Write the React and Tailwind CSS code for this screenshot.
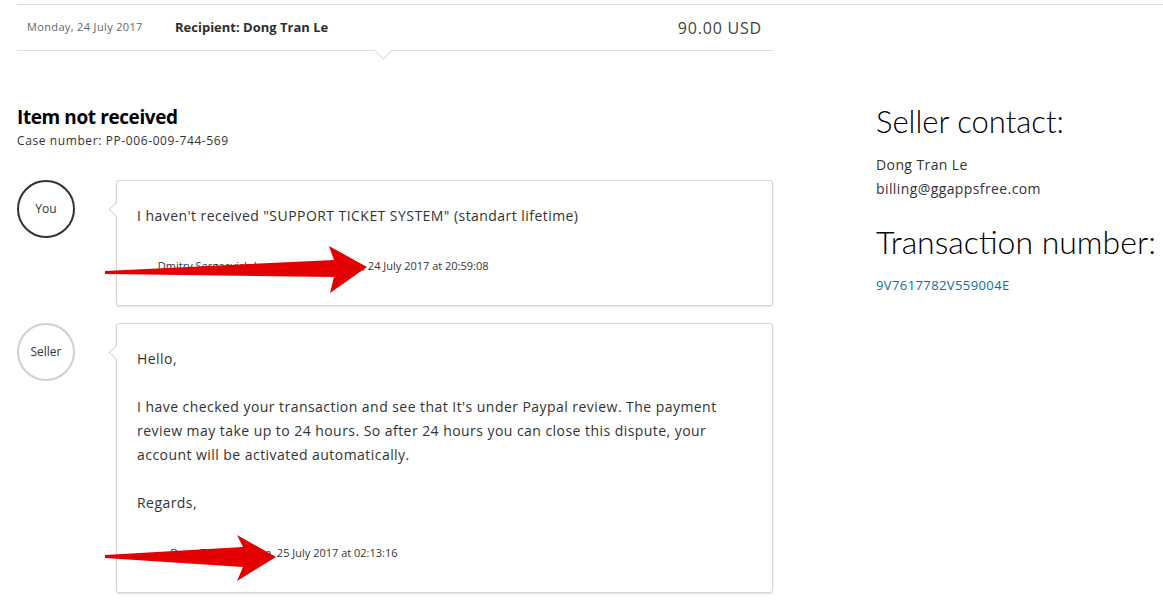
// Dispute case page: header row, conversation, seller contact column
export default function App() {
  const body = { fontFamily: '"Open Sans", "Liberation Sans", sans-serif' }
  const heading = { fontFamily: 'Lato, "Open Sans", sans-serif' }

  // Reusable message bubble with the little pointer on the left
  const Bubble = ({ children, author, date, authorWidth }) => (
    <div className="relative flex-1 bg-white border border-[#d4d4d4] rounded-[3px] shadow-[0_1px_2px_rgba(0,0,0,0.12)] pl-[20px] pr-[40px] pt-[23px] pb-[27px]">
      <div className="absolute left-[-6px] top-[23px] w-[11px] h-[11px] bg-white border-l border-b border-[#d4d4d4] rotate-45" />
      <div className="text-[14px] leading-[24px] tracking-[0.45px] text-[#333]">{children}</div>
      <p className="mt-[26px] pl-[8px] text-[11px] leading-[24px] text-[#333] whitespace-nowrap">
        <span className={`inline-block text-right align-bottom ${authorWidth}`}>{author}</span>
        {date}
      </p>
    </div>
  )

  return (
    <div className="relative min-h-screen bg-white text-[#2c2e2f]" style={body}>
      <div className="ml-[17px] mt-[4px] border-t border-[#dedede]" />

      <div className="flex pl-[17px]">
        {/* Left column */}
        <div className="w-[756px] shrink-0">
          {/* Transaction summary row */}
          <div className="relative flex items-center h-[46px] border-b border-[#dedede] pl-[10px] pr-[11px]">
            <span className="w-[148px] text-[11px] tracking-[0.35px] text-[#666]">Monday, 24 July 2017</span>
            <span className="text-[13px] font-bold text-[#2c2e2f]">Recipient: Dong Tran Le</span>
            <span className="ml-auto text-[16px] tracking-[0.8px] text-[#444]">90.00 USD</span>
            <div className="absolute left-[360px] bottom-[-7px] w-[13px] h-[13px] bg-white border-r border-b border-[#dedede] rotate-45" />
          </div>

          {/* Case title */}
          <div className="mt-[54px]">
            <h1 className="text-[19px] leading-[24px] font-bold text-black tracking-[-0.4px]">Item not received</h1>
            <p className="text-[12px] leading-[24px] tracking-[0.6px] text-[#333]">Case number: PP-006-009-744-569</p>
          </div>

          {/* Conversation */}
          <div className="mt-[27px] flex flex-col gap-[17px]">
            <div className="flex gap-[41px]">
              <div className="w-[58px] h-[58px] shrink-0 rounded-full border-2 border-[#333] flex items-center justify-center text-[12px] text-[#333]">
                You
              </div>
              <Bubble author="Dmitry Sergeevich Ivanov wrote on Mon," date=" 24 July 2017 at 20:59:08" authorWidth="w-[220px]">
                <p>I haven't received "SUPPORT TICKET SYSTEM" (standart lifetime)</p>
              </Bubble>
            </div>

            <div className="flex gap-[41px]">
              <div className="w-[58px] h-[58px] shrink-0 rounded-full border-2 border-[#d0d0d0] flex items-center justify-center text-[12px] text-[#333]">
                Seller
              </div>
              <Bubble author="Dong Tran Le wrote," date=" 25 July 2017 at 02:13:16" authorWidth="w-[129px]">
                <p>Hello,</p>
                <p className="mt-[24px]">
                  I have checked your transaction and see that It's under Paypal review. The payment review may take up to 24 hours. So after 24 hours you can close this dispute, your account will be activated automatically.
                </p>
                <p className="mt-[24px]">Regards,</p>
              </Bubble>
            </div>
          </div>
        </div>

        {/* Right column */}
        <div className="ml-[103px] pt-[98px] whitespace-nowrap">
          <h2 className="text-[31px] leading-[36px] font-light text-black" style={heading}>Seller contact:</h2>
          <p className="mt-[14px] text-[14px] leading-[24px] tracking-[0.4px] text-[#333]">Dong Tran Le</p>
          <p className="text-[14px] leading-[24px] tracking-[0.4px] text-[#333]">billing@ggappsfree.com</p>
          <h2 className="mt-[21px] text-[32px] leading-[40px] font-light text-black" style={heading}>Transaction number:</h2>
          <p className="mt-[11px] text-[13px] leading-[24px] tracking-[0.4px] text-[#0b6fa4]">9V7617782V559004E</p>
        </div>
      </div>

      {/* Red annotation arrows */}
      <svg className="absolute inset-0 w-full h-full pointer-events-none" width="1163" height="602">
        <polygon fill="#e30000" points="105,267 334,256 329,242 367,263 330,289 334,273 105,270" />
        <polygon fill="#e30000" points="105,551 243,543 237,531 276,553 237,577 243,563 105,554" />
      </svg>
    </div>
  )
}
